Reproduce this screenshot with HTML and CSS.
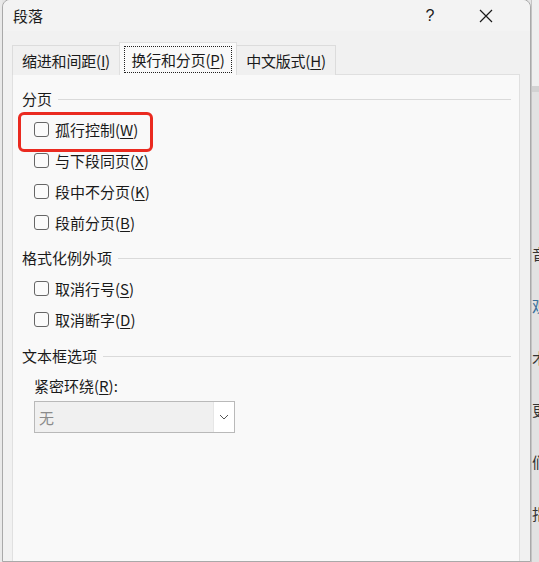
FILE: index.html
```html
<!DOCTYPE html>
<html lang="zh-CN">
<head>
    <meta charset="UTF-8">
    <title>段落</title>
    <link rel="stylesheet" href="styles.css">
</head>
<body>
    <div class="backdrop left"></div>

    <div class="dialog">
        <div class="titlebar">
            <span class="title">段落</span>
            <span class="help">?</span>
            <span class="close">
                <svg width="14" height="14" viewBox="0 0 14 14"><path d="M1 1 L13 13 M13 1 L1 13" stroke="#1a1a1a" stroke-width="1.2" fill="none"/></svg>
            </span>
        </div>

        <div class="tabs">
            <div class="tab indent">缩进和间距(<u>I</u>)</div>
            <div class="tab active"><span class="focus">换行和分页(<u>P</u>)</span></div>
            <div class="tab asian">中文版式(<u>H</u>)</div>
        </div>

        <div class="panel">
            <div class="legend"><span>分页</span></div>
            <div class="rows first">
                <label class="row marked"><span class="box"></span>孤行控制(<u>W</u>)</label>
                <label class="row"><span class="box"></span>与下段同页(<u>X</u>)</label>
                <label class="row"><span class="box"></span>段中不分页(<u>K</u>)</label>
                <label class="row"><span class="box"></span>段前分页(<u>B</u>)</label>
            </div>

            <div class="legend"><span>格式化例外项</span></div>
            <div class="rows">
                <label class="row"><span class="box"></span>取消行号(<u>S</u>)</label>
                <label class="row"><span class="box"></span>取消断字(<u>D</u>)</label>
            </div>

            <div class="legend"><span>文本框选项</span></div>
            <div class="field-label">紧密环绕(<u>R</u>):</div>
            <div class="select">
                <span class="value">无</span>
                <span class="arrow">
                    <svg width="10" height="6" viewBox="0 0 10 6"><path d="M1 1 L5 5 L9 1" stroke="#555" stroke-width="1" fill="none"/></svg>
                </span>
            </div>
        </div>
    </div>

    <div class="backdrop right">
        <div class="ruler"></div>
        <div class="doc-text">
            <span>音</span>
            <span class="link">观</span>
            <span>术</span>
            <span>更</span>
            <span>们</span>
            <span>指</span>
        </div>
    </div>
</body>
</html>
```

FILE: styles.css
```css
* {
    margin: 0;
    padding: 0;
    box-sizing: border-box;
}

body {
    width: 539px;
    height: 562px;
    overflow: hidden;
    display: flex;
    font-family: "Noto Sans CJK SC", "Noto Sans", sans-serif;
    font-size: 15px;
    color: #1a1a1a;
    background: #e4e4e4;
}

u {
    text-decoration-thickness: 1px;
    text-underline-offset: 2px;
}

/* document behind the dialog */
.backdrop.left {
    width: 2px;
    flex-shrink: 0;
    background: #e9e9e9;
}

.backdrop.right {
    flex: 1;
    background: #e2e2e2;
    overflow: hidden;
    border-left: 1px solid #c4c4c4;
}

.backdrop .ruler {
    height: 92px;
    background: #efefef;
    border-bottom: 6px solid #d2d2d2;
}

.doc-text {
    display: flex;
    flex-direction: column;
    gap: 30px;
    padding-top: 151px;
    font-size: 15px;
    line-height: 22px;
    color: #333;
}

.doc-text .link {
    color: #3a6f9a;
}

/* dialog */
.dialog {
    width: 529px;
    flex-shrink: 0;
    margin-top: -1px;
    background: #f1f1f1;
    border: 1px solid #a9a9a9;
    border-radius: 8px 8px 0 0;
    display: flex;
    flex-direction: column;
}

.titlebar {
    height: 31px;
    display: flex;
    align-items: center;
    padding-left: 10px;
    background: #f3f3f3;
    border-radius: 8px 8px 0 0;
}

.title {
    flex: 1;
    line-height: 20px;
}

.help {
    width: 56px;
    text-align: center;
    font-family: "Liberation Sans", sans-serif;
    font-size: 16px;
}

.close {
    width: 56px;
    display: flex;
    justify-content: center;
    margin-right: 16px;
}

.tabs {
    display: flex;
    align-items: flex-end;
    height: 44px;
    padding-left: 9px;
    margin-bottom: -1px;
    position: relative;
    z-index: 1;
}

.tab {
    height: 30px;
    display: flex;
    align-items: center;
    justify-content: center;
    border: 1px solid #dcdcdc;
    border-bottom: none;
    background: #f0f0f0;
    line-height: 20px;
    white-space: nowrap;
    letter-spacing: -0.2px;
}

.tab + .tab {
    margin-left: -1px;
}

.tab.indent {
    width: 108px;
}

.tab.active {
    width: 118px;
    height: 33px;
    background: #f9f9f9;
    border-color: #e0e0e0;
}

.tab.active .focus {
    width: 108px;
    height: 27px;
    display: flex;
    align-items: center;
    justify-content: center;
    border: 1px dotted #202020;
    margin-top: 1px;
}

.tab.asian {
    width: 100px;
}

.panel {
    flex: 1;
    margin: 0 10px 0 9px;
    background: #f9f9f9;
    border: 1px solid #e0e0e0;
    border-bottom: none;
    padding: 14px 8px 0 9px;
}

.legend {
    display: flex;
    align-items: center;
    height: 20px;
    line-height: 20px;
}

.legend::after {
    content: '';
    flex: 1;
    height: 1px;
    background: #dadada;
    margin-left: 6px;
}

.rows {
    display: flex;
    flex-direction: column;
    padding: 5px 0 10px 12px;
}

.rows:not(.first) {
    padding-bottom: 11px;
}

.row {
    height: 31px;
    display: flex;
    align-items: center;
    width: fit-content;
    line-height: 20px;
    position: relative;
}

.box {
    width: 15px;
    height: 15px;
    border: 1px solid #666;
    border-radius: 3px;
    background: #fbfbfb;
    margin-right: 6px;
}

.row.marked::after {
    content: '';
    position: absolute;
    left: -16px;
    top: -2px;
    width: 129px;
    height: 34px;
    border: 3px solid #ea2a20;
    border-radius: 6px;
}

.field-label {
    margin-top: 10px;
    padding-left: 12px;
    line-height: 20px;
}

.select {
    margin: 5px 0 0 12px;
    width: 201px;
    height: 32px;
    display: flex;
    border: 1px solid #b9b9b9;
    background: #f0f0f0;
}

.select .value {
    flex: 1;
    display: flex;
    align-items: center;
    padding-left: 4px;
    color: #8a8a8a;
}

.select .arrow {
    width: 21px;
    display: flex;
    align-items: center;
    justify-content: center;
    background: #ffffff;
    border-left: 1px solid #e6e6e6;
}
```
